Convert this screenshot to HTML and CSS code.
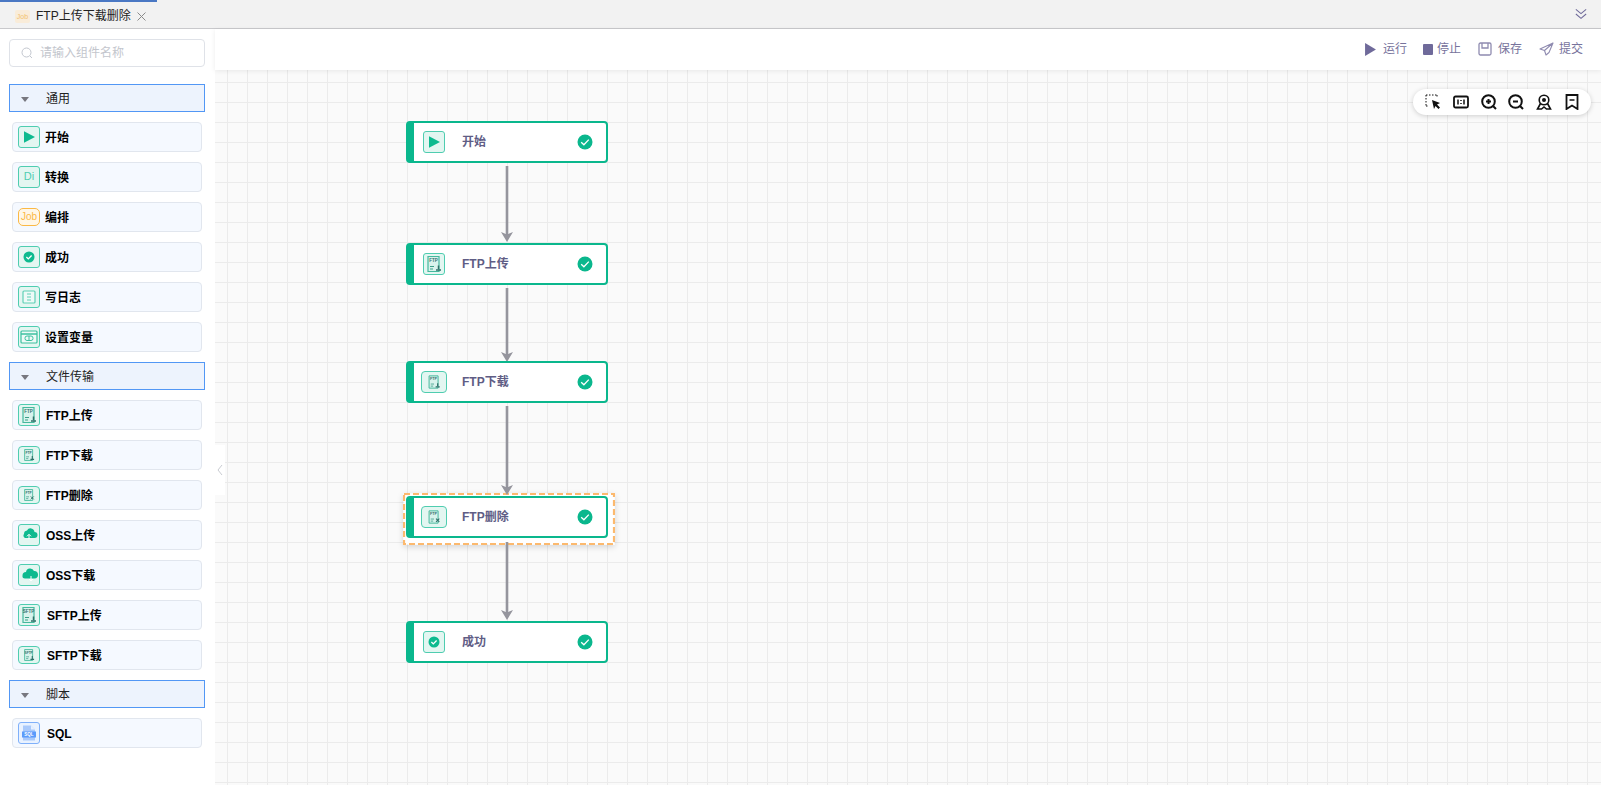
FILE: index.html
```html
<!DOCTYPE html>
<html lang="zh-CN">
<head>
<meta charset="utf-8">
<title>FTP上传下载删除</title>
<link rel="stylesheet" href="styles.css">
</head>
<body>
<svg class="defs" width="0" height="0" aria-hidden="true">
  <symbol id="i-play" viewBox="0 0 22 22"><path d="M6 5.200 17 11 6 16.800z" fill="#0dba8f"/></symbol>
  <symbol id="i-ok" viewBox="0 0 22 22"><circle cx="11" cy="11" r="5.500" fill="#0dba8f"/><path d="M8.400 11l1.900 1.900 3.300-3.400" fill="none" stroke="#fff" stroke-width="1.300"/></symbol>
  <symbol id="i-log" viewBox="0 0 22 22"><rect x="5" y="5" width="12" height="12" rx="1" fill="#eefaf7" stroke="#5fd0b6" stroke-width="1.200"/><path d="M9 8h4M9 11h4M9 14h4" stroke="#5fd0b6"/></symbol>
  <symbol id="i-var" viewBox="0 0 22 22"><rect x="3" y="5" width="16" height="12" rx="1" fill="#eefaf7" stroke="#3cc0a0" stroke-width="1.200"/><path d="M3 8h16" stroke="#3cc0a0" stroke-width="1.500"/><rect x="7" y="10" width="8" height="4.500" rx="2" fill="none" stroke="#3cc0a0"/><path d="M11 10v4.500" stroke="#3cc0a0"/></symbol>
  <symbol id="i-up" viewBox="0 0 22 22"><path d="M6 10a3.500 3.500 0 0 1 3-3.500 4 4 0 0 1 7.500 1.500 3 3 0 0 1 0 6H7a2.600 2.600 0 0 1-1-4z" fill="#0dba8f"/><path d="M11 15V10.500M9 12.300l2-2 2 2" stroke="#fff" fill="none"/></symbol>
  <symbol id="i-down" viewBox="0 0 22 22"><path d="M4.500 11.500a3.500 3.500 0 0 1 3.500-3.500 4.200 4.200 0 0 1 8-1 3.500 3.500 0 0 1 .5 7.500H7a2.600 2.600 0 0 1-2.500-3z" fill="#0dba8f"/><path d="M13 17v-5M11 15l2 2 2-2" stroke="#fff" fill="none"/></symbol>
  <symbol id="i-sql" viewBox="0 0 22 22"><path d="M5 3.500h8l4 4v11H5z" fill="#a9c9fb"/><path d="M13 3.500v4h4z" fill="#e8f1ff"/><rect x="4" y="9.500" width="14" height="6" fill="#5b9bfb"/></symbol>
  <symbol id="i-sheet" viewBox="0 0 22 22"><path d="M5 3.500h11v15H5z" fill="#d8f3ec" stroke="#45b89d" stroke-width="1.200"/><path d="M7 13.500h4M7 16h3" stroke="#3b9f88"/></symbol>
  <symbol id="i-check" viewBox="0 0 16 16"><circle cx="8" cy="8" r="7.500" fill="#0ab78d"/><path d="M4.200 8.200l2.700 2.600 4.900-5.200" fill="none" stroke="#fff" stroke-width="1.300"/></symbol>
</svg>

<header class="tabbar">
  <div class="tab">
    <span class="tab-job">Job</span>
    <span class="tab-title">FTP上传下载删除</span>
    <svg class="tab-close" viewBox="0 0 9 9"><path d="M.5.5l8 8M8.500.5l-8 8" stroke="#8a8a8a" fill="none"/></svg>
  </div>
  <svg class="tab-more" viewBox="0 0 14 13"><path d="M1 1l6 5 6-5M1 6.500l6 5 6-5" fill="none" stroke="#6f6a9a" stroke-width="1.200"/></svg>
</header>

<div class="main">
  <aside class="sidebar">
    <div class="search">
      <svg class="search-icon" viewBox="0 0 12 12"><circle cx="5.500" cy="5.500" r="4.500" fill="none" stroke="#c3c7cf"/><path d="M9 9l2 2" stroke="#c3c7cf"/></svg>
      <span>请输入组件名称</span>
    </div>

    <div class="group"><i class="caret"></i>通用</div>
    <div class="item"><span class="ic"><svg viewBox="0 0 22 22"><use href="#i-play"/></svg></span>开始</div>
    <div class="item"><span class="ic ic-text">Di</span>转换</div>
    <div class="item"><span class="ic ic-job">Job</span>编排</div>
    <div class="item"><span class="ic"><svg viewBox="0 0 22 22"><use href="#i-ok"/></svg></span>成功</div>
    <div class="item"><span class="ic"><svg viewBox="0 0 22 22"><use href="#i-log"/></svg></span>写日志</div>
    <div class="item"><span class="ic"><svg viewBox="0 0 22 22"><use href="#i-var"/></svg></span>设置变量</div>

    <div class="group"><i class="caret"></i>文件传输</div>
    <div class="item item-latin"><span class="ic"><svg viewBox="0 0 22 22"><use href="#i-sheet"/><text x="10.500" y="9" class="mini">FTP</text><path d="M15.500 12.500v3.500M13 17h5" stroke="#2e6f68" stroke-width="1.500"/></svg></span>FTP上传</div>
    <div class="item item-latin"><span class="ic ic-short"><svg viewBox="0 0 22 22"><use href="#i-sheet"/><text x="10.500" y="9" class="mini">FTP</text><path d="M15.500 12.500v3.500M13 17h5" stroke="#2e6f68" stroke-width="1.500"/></svg></span>FTP下载</div>
    <div class="item item-latin"><span class="ic ic-short"><svg viewBox="0 0 22 22"><use href="#i-sheet"/><text x="10.500" y="9" class="mini">FTP</text><path d="M13.500 13l4 4M17.500 13l-4 4" stroke="#2e6f68" stroke-width="1.300"/></svg></span>FTP删除</div>
    <div class="item item-latin"><span class="ic"><svg viewBox="0 0 22 22"><use href="#i-up"/></svg></span>OSS上传</div>
    <div class="item item-latin"><span class="ic"><svg viewBox="0 0 22 22"><use href="#i-down"/></svg></span>OSS下载</div>
    <div class="item item-far"><span class="ic"><svg viewBox="0 0 22 22"><use href="#i-sheet"/><text x="10.500" y="9" class="mini">SFTP</text><path d="M15.500 12.500v3.500M13 17h5" stroke="#2e6f68" stroke-width="1.500"/></svg></span>SFTP上传</div>
    <div class="item item-far"><span class="ic ic-short"><svg viewBox="0 0 22 22"><use href="#i-sheet"/><text x="10.500" y="9" class="mini">SFTP</text><path d="M15.500 12.500v3.500M13 17h5" stroke="#2e6f68" stroke-width="1.500"/></svg></span>SFTP下载</div>

    <div class="group"><i class="caret"></i>脚本</div>
    <div class="item item-far"><span class="ic ic-blue"><svg viewBox="0 0 22 22"><use href="#i-sql"/><text x="11" y="14" class="mini mini-sql">SQL</text></svg></span>SQL</div>
  </aside>

  <section class="work">
    <nav class="toolbar">
      <span class="act"><svg class="a-run" viewBox="0 0 10 12"><path d="M0 0l10 6-10 6z" fill="#6f6a9a"/></svg>运行</span>
      <span class="act"><i class="a-stop"></i>停止</span>
      <span class="act act-gap"><svg class="a-save" viewBox="0 0 14 14"><rect x="1" y="1" width="12" height="12" rx="1.500" fill="none" stroke="#8f8bb0" stroke-width="1.300"/><path d="M4 1v5h6V1" fill="none" stroke="#8f8bb0" stroke-width="1.300"/></svg>保存</span>
      <span class="act act-gap"><svg class="a-send" viewBox="0 0 15 14"><path d="M14 1 1 7l4.500 1.500L7 13l3-2.500L14 1zM5.500 8.500 14 1" fill="none" stroke="#8f8bb0" stroke-width="1.100" stroke-linejoin="round"/></svg>提交</span>
    </nav>

    <div class="canvas">
      <svg class="selected" viewBox="0 0 212 52" width="212" height="52"><rect x="1" y="1" width="210" height="50" fill="#fff" stroke="#fcb96e" stroke-width="2.200" stroke-dasharray="6 3"/></svg>

      <svg class="edges" width="420" height="560">
        <g stroke="#95959d" stroke-width="2.600" fill="none">
          <path d="M292 96v70"/><path d="M292 218v68"/><path d="M292 336v82"/><path d="M292 472v72"/>
        </g>
        <g fill="#95959d">
          <path d="M286 162 292 172 298 162 292 164.500z"/>
          <path d="M286 282 292 292 298 282 292 284.500z"/>
          <path d="M286 415 292 425 298 415 292 417.500z"/>
          <path d="M286 540 292 550 298 540 292 542.500z"/>
        </g>
      </svg>

      <div class="node n1"><span class="ic"><svg viewBox="0 0 22 22"><use href="#i-play"/></svg></span><span class="node-name">开始</span><svg class="node-check" viewBox="0 0 16 16"><use href="#i-check"/></svg></div>
      <div class="node n2"><span class="ic"><svg viewBox="0 0 22 22"><use href="#i-sheet"/><text x="10.500" y="9" class="mini">FTP</text><path d="M15.500 12.500v3.500M13 17h5" stroke="#2e6f68" stroke-width="1.500"/></svg></span><span class="node-name">FTP上传</span><svg class="node-check" viewBox="0 0 16 16"><use href="#i-check"/></svg></div>
      <div class="node n3"><span class="ic node-ic-wide"><svg viewBox="0 0 22 22"><use href="#i-sheet"/><text x="10.500" y="9" class="mini">FTP</text><path d="M15.500 12.500v3.500M13 17h5" stroke="#2e6f68" stroke-width="1.500"/></svg></span><span class="node-name">FTP下载</span><svg class="node-check" viewBox="0 0 16 16"><use href="#i-check"/></svg></div>
      <div class="node n4"><span class="ic node-ic-wide"><svg viewBox="0 0 22 22"><use href="#i-sheet"/><text x="10.500" y="9" class="mini">FTP</text><path d="M13.500 13l4 4M17.500 13l-4 4" stroke="#2e6f68" stroke-width="1.300"/></svg></span><span class="node-name">FTP删除</span><svg class="node-check" viewBox="0 0 16 16"><use href="#i-check"/></svg></div>
      <div class="node n5"><span class="ic"><svg viewBox="0 0 22 22"><use href="#i-ok"/></svg></span><span class="node-name">成功</span><svg class="node-check" viewBox="0 0 16 16"><use href="#i-check"/></svg></div>

      <div class="collapse"><svg viewBox="0 0 6 12"><path d="M5 1 1 6l4 5" fill="none" stroke="#c9ccd2"/></svg></div>

      <div class="tools">
        <svg viewBox="0 0 16 16"><path d="M1 1h11M1 1v11M12 1v3M1 12h3" fill="none" stroke="#111" stroke-dasharray="1.500 1.500"/><path d="M7 6l8 3-3 1.500 3 3-1.500 1.500-3-3L9 15z" fill="#111"/></svg>
        <svg viewBox="0 0 16 16"><rect x="1" y="2.500" width="14" height="11" rx="1.500" fill="none" stroke="#111" stroke-width="1.800"/><path d="M5 5.500v5M8 6v1M8 9v1M11 5.500v5" stroke="#111" stroke-width="1.500"/></svg>
        <svg viewBox="0 0 16 16"><circle cx="7.500" cy="7.500" r="6.300" fill="none" stroke="#111" stroke-width="2"/><path d="M12 12l3 3M5 7.500h5M7.500 5v5" stroke="#111" stroke-width="2"/></svg>
        <svg viewBox="0 0 16 16"><circle cx="7.500" cy="7.500" r="6.300" fill="none" stroke="#111" stroke-width="2"/><path d="M12 12l3 3M5 7.500h5" stroke="#111" stroke-width="2"/></svg>
        <svg viewBox="0 0 16 16"><circle cx="8" cy="6" r="4.800" fill="none" stroke="#111" stroke-width="1.600"/><circle cx="8" cy="6" r="2" fill="#111"/><path d="M4.500 9.500 1.500 15h4L8 13l2.500 2h4l-3-5.500" fill="none" stroke="#111" stroke-width="1.600"/></svg>
        <svg viewBox="0 0 16 16"><path d="M2.500 1h11v14L8 11.500 2.500 15z" fill="none" stroke="#111" stroke-width="1.800"/><path d="M5.500 6h5" stroke="#111" stroke-width="1.500"/></svg>
      </div>
    </div>
  </section>
</div>
</body>
</html>
```
FILE: styles.css
```css
* { box-sizing: border-box; }
html, body { margin: 0; height: 100%; overflow: hidden; }
body {
  display: flex;
  flex-direction: column;
  background: #fff;
  font: 12px/1.2 "Liberation Sans", "Noto Sans CJK SC", sans-serif;
  color: #111;
}
.defs { position: absolute; }

/* tab strip */
.tabbar {
  flex: none;
  height: 29px;
  display: flex;
  align-items: center;
  justify-content: space-between;
  background: #f2f2f2;
  border-bottom: 1px solid #c9c9cc;
  padding-right: 14px;
}
.tab {
  width: 157px;
  height: 28px;
  padding: 2px 0 0 15px;
  display: flex;
  align-items: center;
  border-top: 2px solid #4a78c4;
}
.tab-job {
  width: 15px;
  height: 13px;
  margin-right: 6px;
  border-radius: 2px;
  background: #f9ecd9;
  color: #f3c26e;
  font: 7px/13px "Liberation Sans", sans-serif;
  text-align: center;
}
.tab-title { font-size: 12px; color: #222; white-space: nowrap; }
.tab-close { width: 9px; height: 9px; margin-left: 6px; }
.tab-more { width: 12px; height: 12px; }

.main { flex: 1; display: flex; min-height: 0; }

/* component palette */
.sidebar {
  flex: none;
  width: 215px;
  padding: 10px 0 0 9px;
  background: #fff;
  display: flex;
  flex-direction: column;
  align-items: flex-start;
}
.search {
  width: 196px;
  height: 28px;
  margin-bottom: 17px;
  padding-left: 11px;
  display: flex;
  align-items: center;
  gap: 7px;
  border: 1px solid #dfe2e8;
  border-radius: 4px;
  color: #c3c6cd;
}
.search-icon { width: 12px; height: 12px; }
.group {
  width: 196px;
  height: 28px;
  margin-bottom: 10px;
  padding: 2px 0 0 11px;
  display: flex;
  align-items: center;
  background: #edf3fd;
  border: 1px solid #5297f5;
  color: #222;
}
.caret {
  width: 0;
  height: 0;
  margin-right: 17px;
  border: 4px solid transparent;
  border-top: 5px solid #77777f;
  border-bottom: 0;
}
.item {
  width: 190px;
  height: 30px;
  margin: 0 0 10px 3px;
  padding: 2px 0 0 5px;
  display: flex;
  align-items: center;
  gap: 5px;
  background: #f5f9ff;
  border: 1px solid #e1e6ee;
  border-radius: 4px;
  font-weight: 700;
  color: #000;
}
.item-latin { gap: 6px; }
.item-far { gap: 7px; }
.ic {
  flex: none;
  width: 22px;
  height: 22px;
  display: flex;
  align-items: center;
  justify-content: center;
  background: #e3f6f1;
  border: 1px solid #4fcdb0;
  border-radius: 3px;
}
.item .ic { margin-top: -2px; }
.ic svg { width: 22px; height: 22px; flex: none; }
.ic-short { height: 18px; border-radius: 4px; }
.ic-short svg { width: 16px; height: 16px; }
.ic-text { color: #4fcdb0; font-size: 11px; font-weight: 400; }
.ic-job { height: 18px; background: #fff7e8; border-color: #fbb945; border-radius: 5px; color: #fbb945; font-size: 10px; font-weight: 400; }
.ic-blue { background: #e9f2ff; border-color: #7fb0fa; }
.mini { font: 700 4.500px "Liberation Sans", sans-serif; fill: #35706d; text-anchor: middle; }
.mini-sql { fill: #fff; }

/* right side */
.work { flex: 1; min-width: 0; display: flex; flex-direction: column; }
.toolbar {
  flex: none;
  height: 41px;
  padding-right: 18px;
  display: flex;
  align-items: center;
  justify-content: flex-end;
  background: #fff;
  color: #77739c;
  position: relative;
  z-index: 2;
  box-shadow: 0 1px 5px rgba(0,0,0,.08);
}
.act { display: flex; align-items: center; margin-left: 16px; white-space: nowrap; }
.act-gap { margin-left: 17px; }
.a-run { width: 11px; height: 13px; margin-right: 7px; }
.a-stop { width: 10px; height: 11px; margin-right: 4px; border-radius: 1px; background: #6f6a9a; }
.a-save { width: 14px; height: 14px; margin-right: 6px; }
.a-send { width: 15px; height: 14px; margin-right: 5px; }

/* canvas */
.canvas {
  flex: 1;
  position: relative;
  overflow: hidden;
  background-color: #fafafa;
  background-image:
    linear-gradient(to right, #ebebeb 1px, transparent 1px),
    linear-gradient(to bottom, #ebebeb 1px, transparent 1px);
  background-size: 20px 20px;
  background-position: 12px 12px;
}
.edges { position: absolute; left: 0; top: 0; }
.node {
  position: absolute;
  left: 191px;
  width: 202px;
  height: 42px;
  padding-left: 9px;
  display: flex;
  align-items: center;
  background: #fff;
  border: 2px solid #0ab78d;
  border-left-width: 8px;
  border-radius: 4px;
}
.n1 { top: 51px; }
.n2 { top: 173px; }
.n3 { top: 291px; }
.n4 { top: 426px; }
.n5 { top: 551px; }
.node-ic-wide { width: 26px; margin: 0 -2px; border-radius: 4px; }
.node-ic-wide svg { width: 18px; height: 18px; }
.node-name { margin-left: 17px; flex: 1; font-weight: 700; color: #5f5d85; }
.node-check { width: 16px; height: 16px; margin-right: 13px; }
.selected {
  position: absolute;
  left: 188px;
  top: 423px;
  box-shadow: 0 2px 6px rgba(0,0,0,.15);
}
.collapse {
  position: absolute;
  left: 0;
  top: 375px;
  width: 10px;
  height: 50px;
  display: flex;
  align-items: center;
  justify-content: center;
  background: #fff;
}
.collapse svg { width: 6px; height: 12px; }
.tools {
  position: absolute;
  right: 10px;
  top: 19px;
  width: 178px;
  height: 26px;
  padding: 0 11px 0 12px;
  display: flex;
  align-items: center;
  justify-content: space-between;
  background: #fff;
  border-radius: 13px;
  box-shadow: 0 1px 5px rgba(0,0,0,.18);
}
.tools svg { width: 16px; height: 16px; }
```
